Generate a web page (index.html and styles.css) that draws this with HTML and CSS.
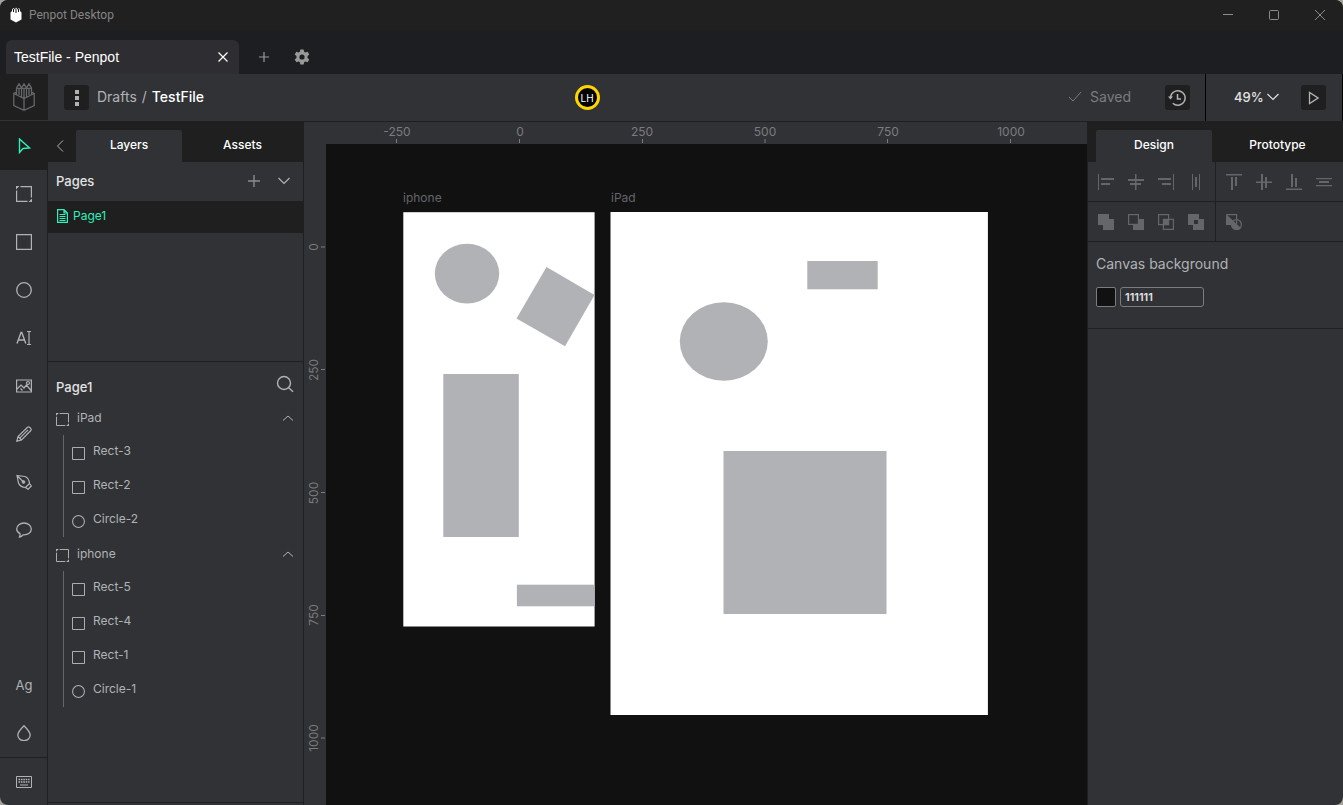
FILE: index.html
```html
<!DOCTYPE html>
<html lang="en">
<head>
<meta charset="utf-8">
<title>Penpot Desktop</title>
<link rel="stylesheet" href="styles.css">
</head>
<body>
<svg class="defs" aria-hidden="true">
  <symbol id="board" viewBox="0 0 16 16"><path d="M4.500.6h10.900v10.900M.6 4.500v10.900h10.900" fill="none" stroke="currentColor" stroke-width="1.200"/><path d="M0 0h3.500L0 3.500zM16 16h-3.500L16 12.500z" fill="currentColor"/></symbol>
  <symbol id="rect" viewBox="0 0 16 16"><path d="M.6.600h14.800v14.800H.6z" fill="none" stroke="currentColor" stroke-width="1.200"/></symbol>
  <symbol id="circle" viewBox="0 0 16 16"><circle cx="8" cy="8" r="7.300" fill="none" stroke="currentColor" stroke-width="1.300"/></symbol>
  <symbol id="down" viewBox="0 0 12 12"><path d="M.5 3 6 8.500 11.500 3" fill="none" stroke="currentColor" stroke-width="1.200"/></symbol>
  <symbol id="up" viewBox="0 0 12 12"><path d="M1 8.500 6 4l5 4.500" fill="none" stroke="currentColor"/></symbol>
</svg>
<div class="window">
  <header class="titlebar">
    <svg class="app-icon" viewBox="0 0 12 16"><path d="M.5 5.500 2 4V2.500L3.500 1 5 2.500 6 .5l1.500 2L9 1l1 2v1l1.500 1.500v7L6 15.500.5 12.500z" fill="#fff"/><path d="M3.500 2v3M6 2v4M8.500 2v3" stroke="#111"/></svg>
    <span class="app-name">Penpot Desktop</span>
    <div class="window-buttons">
      <button aria-label="Minimize"><svg width="12" height="12"><path d="M1 5.500h10" stroke="#8b8b8b"/></svg></button>
      <button aria-label="Maximize"><svg width="12" height="12"><rect x="1.500" y="1.500" width="9" height="9" rx="1" fill="none" stroke="#8b8b8b"/></svg></button>
      <button aria-label="Close"><svg width="12" height="12"><path d="m1 1 10 10M11 1 1 11" stroke="#8b8b8b"/></svg></button>
    </div>
  </header>
  <nav class="file-tabs">
    <div class="file-tab"><span>TestFile - Penpot</span><button aria-label="Close tab"><svg width="10" height="10"><path d="m.5.500 9 9M9.500.5l-9 9" stroke="#fff" stroke-width="1.200"/></svg></button></div>
    <button class="tab-action" aria-label="New tab"><svg width="12" height="12"><path d="M6 1v10M1 6h10" stroke="#999" stroke-width="1.200"/></svg></button>
    <button class="tab-action" aria-label="Settings"><svg width="16" height="16" viewBox="0 0 16 16"><path fill="#999" fill-rule="evenodd" d="M6.300.500h3.400l.4 2.200 1.300.8 2.200-.8 1.700 2.900L13.500 7.100v1.800l1.800 1.500-1.700 2.900-2.200-.8-1.300.8-.4 2.200H6.300l-.4-2.200-1.300-.8-2.200.8L.7 10.400l1.800-1.500V7.100L.7 5.600l1.700-2.900 2.200.8 1.300-.8zM8 5.400a2.600 2.600 0 1 0 0 5.200 2.600 2.600 0 0 0 0-5.200z"/></svg></button>
  </nav>
  <header class="workspace-header">
    <a class="home" href="#" aria-label="Home"><svg width="22" height="28" viewBox="0 0 22 28" fill="none" stroke="#64666a" stroke-width="1.300"><path d="M.8 10.500 3.500 9M18.500 9l2.700 1.500L11 15.500.8 10.500v12L11 27.300l10.200-4.800v-12M11 15.500v11.800M3.500 11.500V5L6 .8 8.500 5v9M8.500 5 11 .8 13.500 5v9M13.500 5 16 .8 18.500 5v6.500M3.500 5.300h15M6 6v6M11 6v9M16 6v6"/></svg></a>
    <div class="file-info">
      <button class="square-button" aria-label="Menu"><svg width="4" height="16" fill="#b1b2b5"><path d="M0 0h4v4H0zM0 6h4v4H0zM0 12h4v4H0z"/></svg></button>
      <div class="breadcrumb"><a href="#">Drafts</a><span>/</span><strong>TestFile</strong></div>
    </div>
    <div class="avatar">LH</div>
    <div class="header-right">
      <span class="saved"><svg width="14" height="12"><path d="m1 6 4 4 8-9" fill="none" stroke="#7b7c7e"/></svg>Saved</span>
      <button class="square-button" aria-label="History"><svg width="18" height="18" viewBox="0 0 18 18" fill="none" stroke="#b1b2b5" stroke-width="1.500"><path d="M2.500 9a7.300 7.300 0 1 1 2.300 5.300M9.500 5v5H13"/><path d="M0 7.500h5L2.500 10.500z" fill="#b1b2b5" stroke="none"/></svg></button>
      <div class="zoom-box">
        <button class="zoom">49%<svg width="12" height="12"><use href="#down"/></svg></button>
        <button class="square-button" aria-label="Play"><svg width="11" height="14"><path d="M1.500 1.500v11L10 7z" fill="none" stroke="#b1b2b5" stroke-width="1.300"/></svg></button>
      </div>
    </div>
  </header>
  <main class="workspace">
    <aside class="toolbar">
      <button class="tool active" aria-label="Move"><svg width="16" height="16" viewBox="0 0 16 16"><path d="M3.500 1v13.500L7 10.500l6.500-.5z" fill="none" stroke="#31efb8" stroke-width="1.400"/></svg></button>
      <button class="tool" aria-label="Board"><svg width="16" height="16"><use href="#board"/></svg></button>
      <button class="tool" aria-label="Rectangle"><svg width="16" height="16"><use href="#rect"/></svg></button>
      <button class="tool" aria-label="Ellipse"><svg width="16" height="16"><use href="#circle"/></svg></button>
      <button class="tool" aria-label="Text"><svg width="16" height="16" viewBox="0 0 16 16" fill="none" stroke="currentColor"><path d="M1 13.500 5 2.500h.8l4 11M2.300 10h6.200" stroke-width="1.400"/><path d="M11 1.500h4M11 14.500h4M13 1.500v13" stroke-width="1.200"/></svg></button>
      <button class="tool" aria-label="Image"><svg width="16" height="16" viewBox="0 0 16 16" fill="none" stroke="currentColor" stroke-width="1.200"><path d="M.6 2h14.800v12H.6zM1 11l4-4 3 3 2.500-3 5 6M4.500 10.500l2 2"/><circle cx="12" cy="5" r="1.500"/></svg></button>
      <button class="tool" aria-label="Pencil"><svg width="16" height="16" viewBox="0 0 16 16" fill="none" stroke="currentColor" stroke-width="1.200"><path d="m.8 15.200 1.200-4.700L11.500 1.200q1-.8 2 0l1.300 1.300q.8 1 0 2L5.500 14zM2 10.500 5.500 14M4 11.800l8-8"/></svg></button>
      <button class="tool" aria-label="Path"><svg width="16" height="16" viewBox="0 0 16 16" fill="none" stroke="currentColor" stroke-width="1.200"><path d="M1 1.500 9 2.500Q13 4 13.500 9.500L15.300 12 12 15.300 9.500 13.500Q4 13 2.500 9zM1 1.500 7 7.500M13.500 9.500l-4 4"/><circle cx="7.500" cy="8" r="1.200" fill="currentColor"/></svg></button>
      <button class="tool" aria-label="Comments"><svg width="16" height="16" viewBox="0 0 16 16" fill="none" stroke="currentColor" stroke-width="1.300"><path d="M4 11.700Q.7 10 .7 7C.7 3.500 4 1 8 1s7.300 2.500 7.300 6S12 12.800 8 12.800H7Q5.500 14.800 3.500 15 4.300 13 4 11.700z"/></svg></button>
      <span class="spacer"></span>
      <button class="tool typography">Ag</button>
      <button class="tool" aria-label="Colors"><svg width="16" height="16" viewBox="0 0 16 16" fill="none" stroke="currentColor" stroke-width="1.300"><path d="M8 .8Q1.800 7 1.800 10a6 5.500 0 0 0 12.400 0Q14.200 7 8 .8z"/></svg></button>
      <button class="tool shortcuts" aria-label="Shortcuts"><svg width="16" height="16" viewBox="0 0 16 16" fill="none" stroke="currentColor"><path d="M.5 2.500h15v11H.5z"/><path d="M2.500 5.500h11M2.500 8h11" stroke-width="1.600" stroke-dasharray="1.600 .8"/><path d="M4 11h8"/></svg></button>
    </aside>
    <aside class="left-sidebar">
      <div class="panel-tabs">
        <button class="collapse" aria-label="Collapse"><svg width="8" height="14"><path d="M7 1.500 1.500 7 7 12.500" fill="none" stroke="#b1b2b5"/></svg></button>
        <button class="panel-tab selected">Layers</button>
        <button class="panel-tab">Assets</button>
      </div>
      <section class="pages">
        <div class="pages-head"><h2>Pages</h2>
          <button aria-label="Add page"><svg width="12" height="12"><path d="M6 0v12M0 6h12" stroke="#8b8c90" stroke-width="1.400"/></svg></button>
          <button aria-label="Toggle pages"><svg width="12" height="12"><use href="#down"/></svg></button></div>
        <a class="page-item" href="#"><svg width="11" height="14" viewBox="0 0 11 14" fill="none" stroke="currentColor"><path d="M.6.600h6.400l3.400 3.400v9.400H.6zM7 .6V4h3.400" stroke-width="1.200"/><path d="M2.500 5.500h6M2.500 7.500h6M2.500 9.500h6M2.500 11.500h6"/></svg>Page1</a>
      </section>
      <section class="layers">
        <div class="layers-head"><h2>Page1</h2><button aria-label="Search"><svg width="18" height="18" viewBox="0 0 18 18" fill="none" stroke="#b1b2b5" stroke-width="1.400"><circle cx="8" cy="8" r="6.500"/><path d="m12.700 12.700 4.300 4"/></svg></button></div>
        <div class="layer"><svg width="13" height="13"><use href="#board"/></svg><span>iPad</span><button aria-label="Collapse iPad"><svg width="12" height="12"><use href="#up"/></svg></button></div>
        <div class="children">
          <div class="layer"><svg width="13" height="13"><use href="#rect"/></svg><span>Rect-3</span></div>
          <div class="layer"><svg width="13" height="13"><use href="#rect"/></svg><span>Rect-2</span></div>
          <div class="layer"><svg width="13" height="13"><use href="#circle"/></svg><span>Circle-2</span></div>
        </div>
        <div class="layer"><svg width="13" height="13"><use href="#board"/></svg><span>iphone</span><button aria-label="Collapse iphone"><svg width="12" height="12"><use href="#up"/></svg></button></div>
        <div class="children">
          <div class="layer"><svg width="13" height="13"><use href="#rect"/></svg><span>Rect-5</span></div>
          <div class="layer"><svg width="13" height="13"><use href="#rect"/></svg><span>Rect-4</span></div>
          <div class="layer"><svg width="13" height="13"><use href="#rect"/></svg><span>Rect-1</span></div>
          <div class="layer"><svg width="13" height="13"><use href="#circle"/></svg><span>Circle-1</span></div>
        </div>
      </section>
    </aside>
    <section class="viewport">
      <svg class="ruler ruler-x">
        <path d="M92.500 17v4M215.500 17v4M338.500 17v4M461 17v4M583.500 17v4M706.500 17v4"/>
        <text x="93" y="14">-250</text><text x="216" y="14">0</text><text x="338" y="14">250</text><text x="461" y="14">500</text><text x="584" y="14">750</text><text x="707" y="14">1000</text>
      </svg>
      <svg class="ruler ruler-y">
        <path d="M17 103h4M17 225.500h4M17 348.500h4M17 471.500h4M17 594h4"/>
        <text transform="translate(14 103) rotate(-90)">0</text><text transform="translate(14 226) rotate(-90)">250</text><text transform="translate(14 349) rotate(-90)">500</text><text transform="translate(14 471) rotate(-90)">750</text><text transform="translate(14 594) rotate(-90)">1000</text>
      </svg>
      <svg class="stage">
        <text x="77" y="58">iphone</text><text x="285" y="58">iPad</text>
        <rect x="77.300" y="68.200" width="191.300" height="414.300" fill="#fff"/>
        <rect x="284.500" y="68" width="377.400" height="503" fill="#fff"/>
        <g fill="#b1b2b5">
          <ellipse cx="141" cy="129.600" rx="32.200" ry="29.800"/>
          <path d="m220.500 123 48 28-29.500 51.200-48.500-27.700z"/>
          <rect x="117.300" y="230" width="75.500" height="163"/>
          <rect x="190.900" y="440.700" width="77.700" height="21.600"/>
          <rect x="481.300" y="117" width="70.400" height="28.300"/>
          <ellipse cx="397.800" cy="197.500" rx="44" ry="39.200"/>
          <rect x="397.500" y="307" width="163" height="163"/>
        </g>
      </svg>
    </section>
    <aside class="right-sidebar">
      <div class="panel-tabs">
        <button class="panel-tab selected">Design</button>
        <button class="panel-tab">Prototype</button>
      </div>
      <div class="options-row">
        <div class="options-group">
          <button aria-label="Align left"><svg width="16" height="16"><path d="M0 0h1v16H0zM3 4h13v2H3zM3 9h9v2H3z"/></svg></button>
          <button aria-label="Align center"><svg width="16" height="16"><path d="M7 0h1.500v16H7zM0 5h16v2H0zM2 9h11v2H2z"/></svg></button>
          <button aria-label="Align right"><svg width="16" height="16"><path d="M15 0h1v16h-1zM0 4h13v2H0zM4 9h9v2H4z"/></svg></button>
          <button aria-label="Distribute horizontally"><svg width="16" height="16"><path d="M4 0h1v16H4zM11 0h1v16h-1zM7 3h2v10H7z"/></svg></button>
        </div>
        <div class="options-group">
          <button aria-label="Align top"><svg width="16" height="16"><path d="M0 0h16v1.500H0zM5 3h2v13H5zM9 3h2v9H9z"/></svg></button>
          <button aria-label="Align middle"><svg width="16" height="16"><path d="M0 7.500h16V9H0zM5 0h2v16H5zM9 3h2v11H9z"/></svg></button>
          <button aria-label="Align bottom"><svg width="16" height="16"><path d="M0 14.500h16V16H0zM5 0h2v13H5zM9 4h2v9H9z"/></svg></button>
          <button aria-label="Distribute vertically"><svg width="16" height="16"><path d="M0 4h16v1.200H0zM0 11h16v1.200H0zM3 7h10v2H3z"/></svg></button>
        </div>
      </div>
      <div class="options-row">
        <div class="options-group">
          <button aria-label="Union"><svg width="16" height="16"><path d="M0 0h11v5h5v11H5v-5H0z"/></svg></button>
          <button aria-label="Difference"><svg width="16" height="16"><path fill-rule="evenodd" d="M0 0h11v11H0zM1.200 1.200v8.600h8.600V1.200zM11 5h5v11H5v-5h6z"/></svg></button>
          <button aria-label="Intersection"><svg width="16" height="16"><path d="M.6.600h10v10H.6zM5.400 5.400h10v10h-10z" fill="none" stroke="#64666a" stroke-width="1.200"/><path d="M5 5h6v6H5z"/></svg></button>
          <button aria-label="Exclusion"><svg width="16" height="16"><path fill-rule="evenodd" d="M0 0h11v5h5v11H5v-5H0zM6 6v4h4V6z"/></svg></button>
        </div>
        <div class="options-group">
          <button aria-label="Flatten"><svg width="16" height="16"><path d="M0 0 15 14a5.500 5.500 0 0 1-9.800-3H0z"/><path d="M.6.600h10V10" fill="none" stroke="#64666a" stroke-width="1.200"/><circle cx="10.500" cy="10.500" r="4.900" fill="none" stroke="#64666a" stroke-width="1.200"/></svg></button>
        </div>
      </div>
      <section class="canvas-options">
        <label for="bg">Canvas background</label>
        <div class="color-row"><button class="swatch" aria-label="Canvas color"></button><input id="bg" type="text" value="111111"></div>
      </section>
    </aside>
  </main>
</div>
</body>
</html>
```
FILE: styles.css
```css
* { box-sizing: border-box; }
html { background: #a3a399; }
body { margin: 0; font: 12px/16px Inter, "Liberation Sans", sans-serif; color: #b1b2b5; }
button { padding: 0; border: 0; background: none; color: inherit; font: inherit; display: flex; align-items: center; justify-content: center; }
a { color: inherit; text-decoration: none; }
h2 { margin: 0; font-size: 13px; font-weight: 500; color: #e3e3e3; }
svg { display: block; flex: none; }
.defs { position: absolute; width: 0; height: 0; }

.window { height: 100vh; display: flex; flex-direction: column; overflow: hidden; border-radius: 8px; background: #303236; }
.titlebar { height: 30px; flex: none; display: flex; align-items: center; padding-left: 10px; gap: 7px; background: #202020; color: #858585; font-family: Roboto, sans-serif; }
.app-icon { width: 12px; height: 16px; }
.window-buttons { margin-left: auto; display: flex; }
.window-buttons button { width: 46px; height: 28px; }

.file-tabs { height: 44px; flex: none; display: flex; align-items: center; padding-left: 6px; background: #1d1e21; }
.file-tab { width: 233px; height: 34px; margin: 10px 6px 0 0; padding: 0 6px 0 8px; display: flex; align-items: center; justify-content: space-between; border-radius: 6px 6px 0 0; background: #2e2e32; color: #fff; font: 14px/20px "Liberation Sans", sans-serif; }
.file-tab button { width: 20px; height: 20px; }
.tab-action { width: 38px; height: 34px; margin-top: 10px; }

.workspace-header { height: 48px; flex: none; display: grid; grid-template-columns: 48px 17fr 25px 24fr; align-items: center; border-bottom: 1px solid #1f1f1f; }
.home { height: 46px; align-self: start; display: flex; align-items: center; justify-content: center; background: #1f1f1f; }
.file-info { display: flex; align-items: center; gap: 8px; padding-left: 16px; font-size: 14px; }
.breadcrumb { display: flex; gap: 5px; padding-bottom: 1px; }
.breadcrumb strong { color: #fff; font-weight: 500; }
.square-button { width: 25px; height: 25px; border-radius: 3px; background: #1f1f1f; }
.avatar { width: 25px; height: 25px; display: flex; align-items: center; justify-content: center; border: 3px solid #ffd500; border-radius: 50%; background: #000; color: #fff; font-size: 10px; }
.header-right { height: 47px; display: flex; align-items: center; justify-content: flex-end; }
.saved { display: flex; align-items: center; gap: 8px; margin-right: 34px; padding-bottom: 2px; color: #7b7c7e; font-size: 14px; }
.zoom-box { width: 138px; height: 47px; margin-left: 15px; padding: 0 16px 0 28px; display: flex; align-items: center; justify-content: space-between; border: 0 solid #000; border-width: 0 1px; }
.zoom { gap: 3px; padding-bottom: 1px; color: #e3e3e3; font-size: 13px; font-weight: 500; }

.workspace { flex: 1; min-height: 0; display: grid; grid-template-columns: 48px 256px 1fr 256px; }
.toolbar { display: flex; flex-direction: column; border-right: 1px solid #1f1f1f; }
.tool { height: 48px; flex: none; padding-left: 1px; }
.tool.active { background: #1f1f1f; }
.typography { font: 13px/16px Inter, sans-serif; }
.shortcuts { border-top: 1px solid #1f1f1f; }
.spacer { flex: 1; }

.left-sidebar { display: flex; flex-direction: column; border-right: 1px solid #1f1f1f; }
.panel-tabs { height: 40px; flex: none; display: flex; padding-top: 8px; background: #1f1f1f; }
.collapse { width: 28px; padding-right: 4px; }
.panel-tab { flex: 1; color: #fff; font-size: 12px; font-weight: 500; padding-bottom: 2px; }
.left-sidebar .panel-tab.selected { flex: none; width: 106px; }
.panel-tab.selected { border-radius: 2px 2px 0 0; background: #303236; }
.pages { height: 200px; flex: none; border-bottom: 1px solid #1f1f1f; }
.pages-head { height: 39px; display: flex; align-items: center; gap: 18px; padding: 0 13px 1px 8px; }
.pages-head h2 { flex: 1; }
.page-item { height: 32px; display: flex; align-items: center; gap: 5px; padding: 0 9px 3px; background: #1f1f1f; color: #31efb8; }
.layers { flex: 1; margin-bottom: 2px; border-bottom: 1px solid #1f1f1f; }
.layers-head { height: 39px; display: flex; align-items: flex-end; justify-content: space-between; padding: 0 9px 6px 8px; }
.layers-head button { height: 22px; }
.layer { height: 34px; display: flex; align-items: center; gap: 8px; padding: 0 9px 0 8px; }
.layer > svg { margin-top: 2px; }
.layer button { margin-left: auto; }
.children { margin-left: 15px; border-left: 1px solid #64666a; }
.children .layer span { padding-bottom: 2px; }

.viewport { min-width: 0; min-height: 0; display: grid; grid-template: 22px 1fr / 22px 1fr; background: #111; }
.ruler { width: 100%; height: 100%; background: #303236; font-size: 12px; }
.ruler text { fill: #7b7c7e; text-anchor: middle; }
.ruler path { stroke: #7b7c7e; }
.ruler-x { grid-column: 1 / 3; }
.stage { width: 100%; height: 100%; font-size: 12px; }
.stage text { fill: #64666a; }

.right-sidebar { border-left: 1px solid #1f1f1f; }
.right-sidebar .panel-tabs { padding-left: 8px; }
.right-sidebar .panel-tab.selected { flex: none; width: 116px; }
.options-row { height: 40px; display: grid; grid-template-columns: 1fr 1fr; border-bottom: 1px solid #1f1f1f; }
.options-group { display: flex; align-items: center; padding-left: 3px; }
.options-group:first-child { border-right: 1px solid #1f1f1f; }
.options-group button { width: 30px; height: 30px; }
.options-group svg { fill: #64666a; }
.canvas-options { padding: 14px 8px 21px; border-bottom: 1px solid #1f1f1f; }
.canvas-options label { display: block; margin-bottom: 15px; font-size: 14px; }
.color-row { display: flex; gap: 4px; }
.swatch { width: 20px; height: 20px; border: 1px solid #7b7c7e; border-radius: 2px; background: #111; }
.color-row input { width: 84px; height: 20px; padding: 0 4px; border: 1px solid #7b7c7e; border-radius: 3px; background: transparent; color: #e3e3e3; font: 600 11px/16px Inter, sans-serif; }
```
